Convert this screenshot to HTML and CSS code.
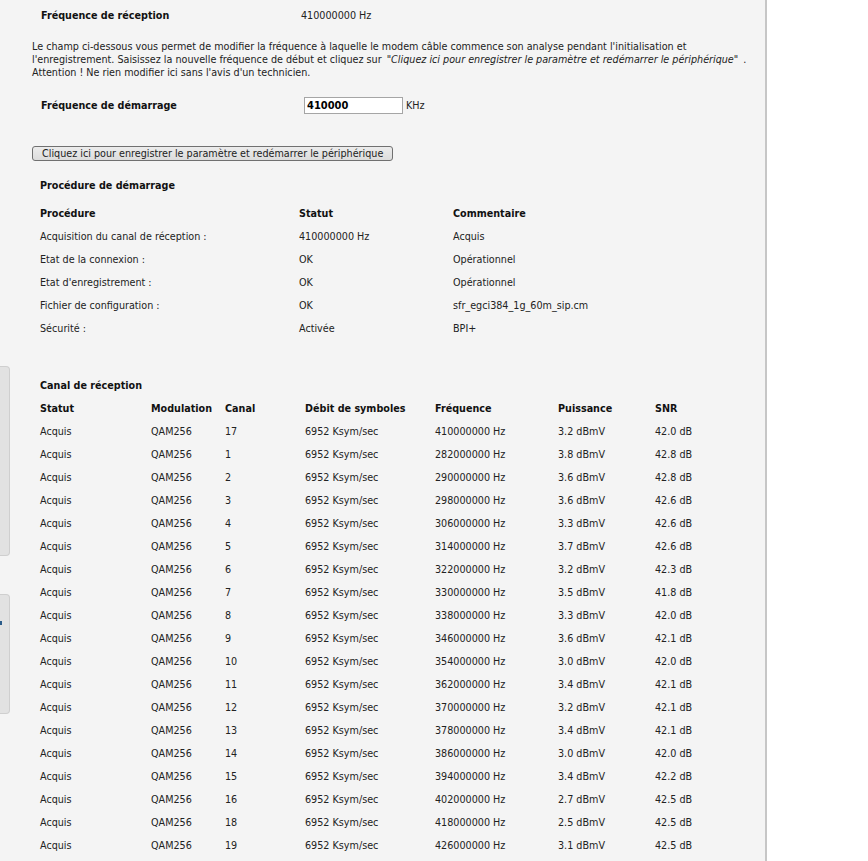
FILE: index.html
```html
<!DOCTYPE html>
<html lang="fr">
<head>
    <meta charset="UTF-8">
    <title>Etat du modem câble</title>
    <link rel="stylesheet" href="styles.css">
</head>
<body>
    <div class="side-tab tab-top"></div>
    <div class="side-tab tab-bottom"><span class="tab-mark"></span></div>

    <div class="main">
        <div class="info-row">
            <span class="label">Fréquence de réception</span>
            <span class="value">410000000 Hz</span>
        </div>

        <p class="intro">
            Le champ ci-dessous vous permet de modifier la fréquence à laquelle le modem câble commence son analyse pendant l'initialisation et l'enregistrement. Saisissez la nouvelle fréquence de début et cliquez sur <i class="quote">"Cliquez ici pour enregistrer le paramètre et redémarrer le périphérique"</i> .
            Attention ! Ne rien modifier ici sans l'avis d'un technicien.
        </p>

        <form class="start-form" onsubmit="return false;">
            <div class="start-row">
                <span class="label">Fréquence de démarrage</span>
                <input type="text" class="freq-input" name="freq" value="410000">
                <span class="unit">KHz</span>
            </div>
            <button type="submit" class="save-btn">Cliquez ici pour enregistrer le paramètre et redémarrer le périphérique</button>
        </form>

        <h3 class="section-title">Procédure de démarrage</h3>
        <table class="data-table proc-table">
            <tr>
                <th class="c-proc">Procédure</th>
                <th class="c-stat">Statut</th>
                <th>Commentaire</th>
            </tr>
            <tr><td>Acquisition du canal de réception :</td><td>410000000 Hz</td><td>Acquis</td></tr>
            <tr><td>Etat de la connexion :</td><td>OK</td><td>Opérationnel</td></tr>
            <tr><td>Etat d'enregistrement :</td><td>OK</td><td>Opérationnel</td></tr>
            <tr><td>Fichier de configuration :</td><td>OK</td><td>sfr_egci384_1g_60m_sip.cm</td></tr>
            <tr><td>Sécurité :</td><td>Activée</td><td>BPI+</td></tr>
        </table>

        <h3 class="section-title channel-title">Canal de réception</h3>
        <table class="data-table channel-table">
            <thead>
                <tr>
                    <th class="c1">Statut</th>
                    <th class="c2">Modulation</th>
                    <th class="c3">Canal</th>
                    <th class="c4">Débit de symboles</th>
                    <th class="c5">Fréquence</th>
                    <th class="c6">Puissance</th>
                    <th>SNR</th>
                </tr>
            </thead>
            <tbody id="channels"></tbody>
        </table>
    </div>

    <script>
        // Liste des canaux descendants
        var channels = [
            [17, 410, '3.2', '42.0'], [1, 282, '3.8', '42.8'], [2, 290, '3.6', '42.8'],
            [3, 298, '3.6', '42.6'], [4, 306, '3.3', '42.6'], [5, 314, '3.7', '42.6'],
            [6, 322, '3.2', '42.3'], [7, 330, '3.5', '41.8'], [8, 338, '3.3', '42.0'],
            [9, 346, '3.6', '42.1'], [10, 354, '3.0', '42.0'], [11, 362, '3.4', '42.1'],
            [12, 370, '3.2', '42.1'], [13, 378, '3.4', '42.1'], [14, 386, '3.0', '42.0'],
            [15, 394, '3.4', '42.2'], [16, 402, '2.7', '42.5'], [18, 418, '2.5', '42.5'],
            [19, 426, '3.1', '42.5']
        ];
        var tbody = document.getElementById('channels');
        channels.forEach(function (c) {
            var tr = document.createElement('tr');
            tr.innerHTML = '<td>Acquis</td><td>QAM256</td><td>' + c[0] + '</td>' +
                '<td>6952 Ksym/sec</td><td>' + c[1] + '000000 Hz</td>' +
                '<td>' + c[2] + ' dBmV</td><td>' + c[3] + ' dB</td>';
            tbody.appendChild(tr);
        });
    </script>
</body>
</html>
```

FILE: styles.css
```css
/* Page d'état du modem */
* {
    margin: 0;
    padding: 0;
    box-sizing: border-box;
}

body {
    font-family: "DejaVu Sans Condensed", "Liberation Sans", sans-serif;
    font-size: 10.7px;
    line-height: 13px;
    color: #222;
    background: #fff;
}

.main {
    width: 767px;
    min-height: 861px;
    background: #f4f4f4;
    border-right: 2px solid #c6c6c6;
    padding-left: 32px;
}

.side-tab {
    position: absolute;
    left: 0;
    width: 10px;
    background: #e2e2e2;
    border: 1px solid #cfcfcf;
    border-left: none;
    border-radius: 0 4px 4px 0;
    overflow: hidden;
}

.tab-top {
    top: 366px;
    height: 190px;
}

.tab-bottom {
    top: 594px;
    height: 120px;
}

.tab-mark {
    display: block;
    width: 2px;
    height: 4px;
    margin-top: 26px;
    background: #2b5c8a;
}

.label {
    font-weight: bold;
    color: #111;
}

.info-row {
    display: flex;
    height: 30px;
    line-height: 30px;
    padding: 1px 0 0 9px;
}

.info-row .label {
    width: 260px;
}

.intro {
    width: 730px;
    margin-top: 10px;
}

.quote {
    padding: 0 2px 0 2px;
}

.start-form {
    margin-top: 14px;
}

.start-row {
    display: flex;
    align-items: center;
    height: 24px;
    padding-left: 9px;
}

.start-row .label {
    width: 263px;
}

.freq-input {
    width: 99px;
    height: 17px;
    border: 1px solid #a5a5a5;
    background: #fff;
    font-family: inherit;
    font-size: 11px;
    font-weight: bold;
    color: #000;
    padding: 0 2px;
    outline: none;
}

.unit {
    margin-left: 3px;
}

.save-btn {
    display: block;
    margin-top: 29px;
    height: 15px;
    padding: 0 9px;
    white-space: nowrap;
    font-family: inherit;
    font-size: 10.7px;
    line-height: 13px;
    color: #222;
    background: linear-gradient(#ececec, #dcdcdc);
    border: 1px solid #707070;
    border-radius: 3px;
}

.section-title {
    font-size: 10.7px;
    font-weight: bold;
    color: #111;
    height: 23px;
    line-height: 23px;
    margin: 13px 0 4px 8px;
}

.channel-title {
    margin-top: 34px;
    margin-bottom: 0;
}

.data-table {
    margin-left: 8px;
    border-collapse: collapse;
}

.data-table th,
.data-table td {
    height: 23px;
    padding: 0;
    text-align: left;
    vertical-align: middle;
    white-space: nowrap;
}

.data-table th {
    font-weight: bold;
    color: #111;
}

.proc-table th {
    height: 24px;
}

.c-proc { width: 259px; }
.c-stat { width: 154px; }

.c1 { width: 111px; }
.c2 { width: 74px; }
.c3 { width: 80px; }
.c4 { width: 130px; }
.c5 { width: 123px; }
.c6 { width: 97px; }
```
